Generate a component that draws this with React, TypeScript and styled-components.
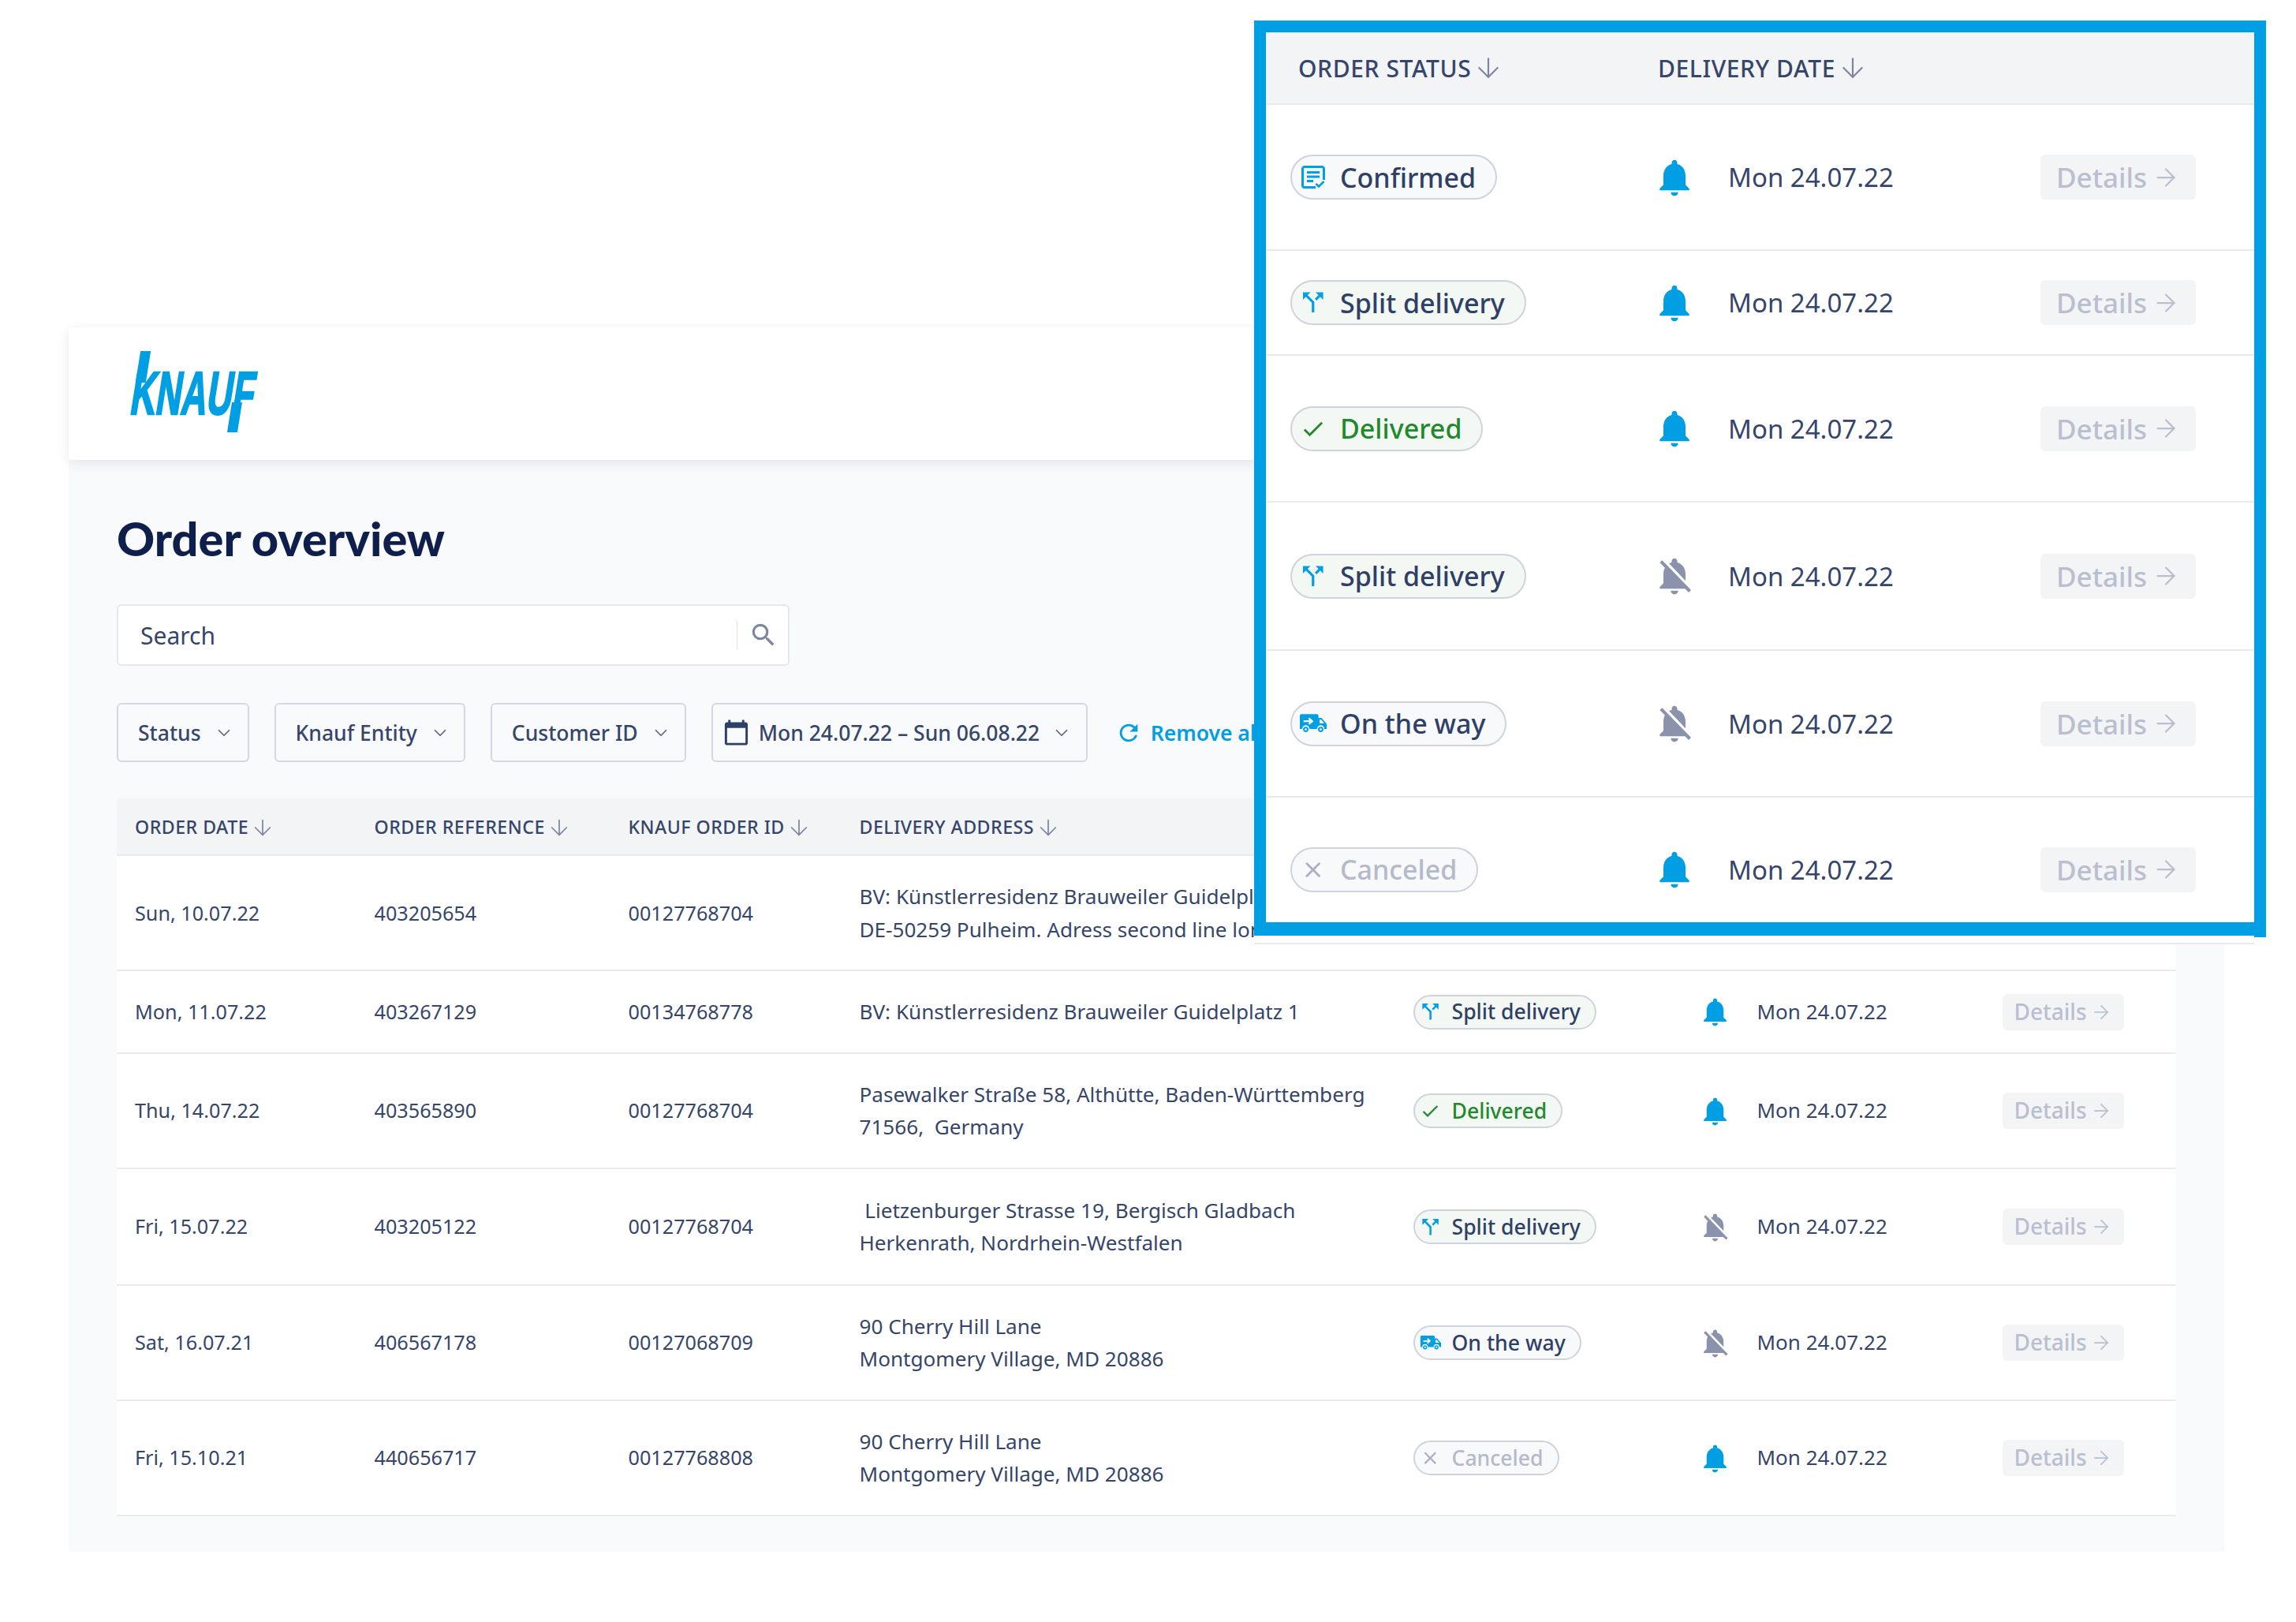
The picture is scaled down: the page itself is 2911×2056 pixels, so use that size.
import styled, { createGlobalStyle } from "styled-components";
import { ArrowDown, ArrowRight, ChevronDown } from "lucide-react";
import {
  MdCalendarToday,
  MdCallSplit,
  MdCheck,
  MdClose,
  MdNotifications,
  MdNotificationsOff,
  MdRefresh,
  MdSearch,
} from "react-icons/md";

type StatusKey = "confirmed" | "split" | "delivered" | "way" | "canceled";

const STATUS: Record<StatusKey, { label: string; tone: string }> = {
  confirmed: { label: "Confirmed", tone: "plain" },
  split: { label: "Split delivery", tone: "tint" },
  delivered: { label: "Delivered", tone: "done" },
  way: { label: "On the way", tone: "plain" },
  canceled: { label: "Canceled", tone: "off" },
};

const ORDERS: {
  date: string;
  reference: string;
  id: string;
  address: string[];
  status: StatusKey;
  muted?: boolean;
  tall?: boolean;
}[] = [
  {
    date: "Sun, 10.07.22",
    reference: "403205654",
    id: "00127768704",
    address: ["BV: Künstlerresidenz Brauweiler Guidelplatz 1", "DE-50259 Pulheim. Adress second line long"],
    status: "confirmed",
  },
  {
    date: "Mon, 11.07.22",
    reference: "403267129",
    id: "00134768778",
    address: ["BV: Künstlerresidenz Brauweiler Guidelplatz 1"],
    status: "split",
  },
  {
    date: "Thu, 14.07.22",
    reference: "403565890",
    id: "00127768704",
    address: ["Pasewalker Straße 58, Althütte, Baden-Württemberg", "71566,  Germany"],
    status: "delivered",
  },
  {
    date: "Fri, 15.07.22",
    reference: "403205122",
    id: "00127768704",
    address: [" Lietzenburger Strasse 19, Bergisch Gladbach", "Herkenrath, Nordrhein-Westfalen"],
    status: "split",
    muted: true,
    tall: true,
  },
  {
    date: "Sat, 16.07.21",
    reference: "406567178",
    id: "00127068709",
    address: ["90 Cherry Hill Lane", "Montgomery Village, MD 20886"],
    status: "way",
    muted: true,
  },
  {
    date: "Fri, 15.10.21",
    reference: "440656717",
    id: "00127768808",
    address: ["90 Cherry Hill Lane", "Montgomery Village, MD 20886"],
    status: "canceled",
  },
];

const CALLOUT_ROWS: { status: StatusKey; muted?: boolean; height: number }[] = [
  { status: "confirmed", height: 185 },
  { status: "split", height: 133 },
  { status: "delivered", height: 186 },
  { status: "split", muted: true, height: 188 },
  { status: "way", muted: true, height: 186 },
  { status: "canceled", height: 184 },
];

function ConfirmedIcon() {
  return (
    <svg viewBox="0 0 30 30" width="100%" height="100%" fill="none">
      <path d="M18 27.500H4a2.500 2.500 0 0 1-2.500-2.500V4A2.500 2.500 0 0 1 4 1.500h22A2.500 2.500 0 0 1 28.500 4v14" stroke="#009fe3" strokeWidth="3" />
      <path d="M7 8.500h16M7 14h16M7 19.500h8" stroke="#009fe3" strokeWidth="3" />
      <path d="M18.500 23l3.500 3.500 6.500-6.500" stroke="#009fe3" strokeWidth="2.600" />
    </svg>
  );
}

function TruckIcon() {
  return (
    <svg viewBox="0 0 36 27" width="100%" height="100%">
      <path d="M2 1h21a2 2 0 0 1 2 2v3h4l7 8v7h-3a5 5 0 0 0-10 0H13a5 5 0 0 0-10 0H0V3a2 2 0 0 1 2-2z" fill="#009fe3" />
      <path d="M26.500 8.500h2.300l4 5h-6.300z" fill="#fff" />
      <circle cx="8" cy="21.500" r="3.600" fill="#009fe3" />
      <circle cx="8" cy="21.500" r="1.500" fill="#fff" />
      <circle cx="28" cy="21.500" r="3.600" fill="#009fe3" />
      <circle cx="28" cy="21.500" r="1.500" fill="#fff" />
      <path d="M5 10.500h11M12 6.500l4.500 4-4.500 4" fill="none" stroke="#fff" strokeWidth="2.500" />
    </svg>
  );
}

function StatusIcon({ status }: { status: StatusKey }) {
  if (status === "confirmed") return <ConfirmedIcon />;
  if (status === "way") return <TruckIcon />;
  if (status === "split") return <MdCallSplit size="128%" color="#009fe3" />;
  if (status === "delivered") return <MdCheck size="110%" color="#1f8a2b" />;
  return <MdClose size="110%" color="#a9afc0" />;
}

function StatusPill({ status, $large }: { status: StatusKey; $large?: boolean }) {
  const { label, tone } = STATUS[status];
  return (
    <Pill $tone={tone} $large={$large}>
      <PillIcon $large={$large}>
        <StatusIcon status={status} />
      </PillIcon>
      {label}
    </Pill>
  );
}

function SortHead({ label, $large }: { label: string; $large?: boolean }) {
  return (
    <HeadLabel $large={$large}>
      {label}
      <ArrowDown size={$large ? 40 : 32} strokeWidth={1.3} color="#7c86a0" />
    </HeadLabel>
  );
}

function Bell({ muted, $large }: { muted?: boolean; $large?: boolean }) {
  const size = $large ? 56 : 43;
  return (
    <BellBox>
      {muted ? <MdNotificationsOff size={size} color="#8a93ab" /> : <MdNotifications size={size} color="#009fe3" />}
    </BellBox>
  );
}

function Details({ $large }: { $large?: boolean }) {
  return (
    <DetailsButton $large={$large}>
      Details
      <ArrowRight size={$large ? 36 : 28} strokeWidth={1.5} />
    </DetailsButton>
  );
}

export default function App() {
  return (
    <Page>
      <GlobalStyle />
      <Panel>
        <TopBar>
          <Logo>
            <LogoText>KNAUF</LogoText>
          </Logo>
        </TopBar>

        <Content>
          <Title>Order overview</Title>

          <SearchBox>
            <SearchText>Search</SearchText>
            <SearchDivider />
            <MdSearch size={38} color="#7c86a0" />
          </SearchBox>

          <Filters>
            <FilterButton>
              Status
              <ChevronDown size={26} strokeWidth={1.6} color="#5b6684" />
            </FilterButton>
            <FilterButton>
              Knauf Entity
              <ChevronDown size={26} strokeWidth={1.6} color="#5b6684" />
            </FilterButton>
            <FilterButton>
              Customer ID
              <ChevronDown size={26} strokeWidth={1.6} color="#5b6684" />
            </FilterButton>
            <DateFilter>
              <MdCalendarToday size={35} color="#2f4066" />
              <DateRange>Mon 24.07.22 – Sun 06.08.22</DateRange>
              <ChevronDown size={26} strokeWidth={1.6} color="#5b6684" />
            </DateFilter>
            <RemoveAll>
              <MdRefresh size={34} />
              Remove all
            </RemoveAll>
          </Filters>

          <Table>
            <TableHead>
              <SortHead label="ORDER DATE" />
              <SortHead label="ORDER REFERENCE" />
              <SortHead label="KNAUF ORDER ID" />
              <SortHead label="DELIVERY ADDRESS" />
              <SortHead label="ORDER STATUS" />
              <SortHead label="DELIVERY DATE" />
            </TableHead>
            {ORDERS.map((order) => (
              <TableRow key={order.reference} $tall={order.tall}>
                <span>{order.date}</span>
                <span>{order.reference}</span>
                <span>{order.id}</span>
                <Address>
                  {order.address.map((line) => (
                    <div key={line}>{line}</div>
                  ))}
                </Address>
                <StatusCell>
                  <StatusPill status={order.status} />
                </StatusCell>
                <Bell muted={order.muted} />
                <DeliveryDate>Mon 24.07.22</DeliveryDate>
                <Details />
              </TableRow>
            ))}
          </Table>
        </Content>
      </Panel>

      <Callout>
        <CalloutBody>
          <CalloutHead>
            <SortHead label="ORDER STATUS" $large />
            <SortHead label="DELIVERY DATE" $large />
          </CalloutHead>
          {CALLOUT_ROWS.map((row, i) => (
            <CalloutRow key={i} $height={row.height}>
              <StatusCell>
                <StatusPill status={row.status} $large />
              </StatusCell>
              <Bell muted={row.muted} $large />
              <span>Mon 24.07.22</span>
              <Details $large />
            </CalloutRow>
          ))}
        </CalloutBody>
      </Callout>
    </Page>
  );
}

/* ===== styled-components ===== */

const GlobalStyle = createGlobalStyle`
  * {
    box-sizing: border-box;
  }

  body {
    margin: 0;
    background: #ffffff;
    font-family: "Noto Sans", "Open Sans", sans-serif;
    color: #36456a;
  }
`;

const Page = styled.div`
  position: relative;
  width: 2911px;
  height: 2056px;
  padding: 415px 91px 0 87px;
  overflow: hidden;
`;

const Panel = styled.div`
  height: 1552px;
  background: #f9fafb;
`;

const TopBar = styled.header`
  height: 168px;
  padding: 55px 0 0 76px;
  background: #ffffff;
  box-shadow: 0 4px 14px rgba(30, 40, 70, 0.1);
`;

const Logo = styled.div`
  position: relative;
  width: 161px;
  height: 56px;

  &::before,
  &::after {
    content: "";
    position: absolute;
    background: #009fe3;
    transform: skewX(-9deg);
  }

  /* tall stem of the k and long stem of the f */
  &::before {
    left: 12px;
    top: -25px;
    width: 13px;
    height: 40px;
  }

  &::after {
    left: 128px;
    top: 40px;
    width: 13px;
    height: 38px;
  }
`;

const LogoText = styled.span`
  display: block;
  font-family: "Liberation Sans", Arial, sans-serif;
  font-size: 77px;
  font-weight: 700;
  line-height: 56px;
  color: #009fe3;
  white-space: nowrap;
  -webkit-text-stroke: 2.5px #009fe3;
  transform-origin: 0 100%;
  transform: skewX(-9deg) scaleX(0.58);
`;

const Content = styled.main`
  padding: 0 62px 0 61px;
`;

const Title = styled.h1`
  margin: 0;
  padding-top: 63px;
  height: 183px;
  font-family: Lato, sans-serif;
  font-size: 59.5px;
  font-weight: 900;
  line-height: 72px;
  color: #0f1f4b;
`;

const SearchBox = styled.div`
  display: flex;
  align-items: center;
  width: 853px;
  height: 78px;
  padding: 0 12px 0 28px;
  background: #ffffff;
  border: 2px solid #e6e8ed;
  border-radius: 6px;
`;

const SearchText = styled.span`
  flex: 1;
  font-size: 30px;
`;

const SearchDivider = styled.span`
  width: 1px;
  height: 38px;
  margin-right: 14px;
  background: #dfe2e8;
`;

const Filters = styled.div`
  display: flex;
  align-items: center;
  gap: 31.5px;
  margin-top: 47px;
  white-space: nowrap;
`;

const FilterButton = styled.div`
  display: flex;
  align-items: center;
  gap: 16px;
  height: 75px;
  padding: 0 17.5px 0 25px;
  font-size: 26.5px;
  font-weight: 500;
  border: 2px solid #d4d8e0;
  border-radius: 6px;
`;

const DateFilter = styled(FilterButton)`
  gap: 0;
  padding: 0 18px 0 12px;
`;

const DateRange = styled.span`
  margin: 0 15px 0 11px;
`;

const RemoveAll = styled.div`
  display: flex;
  align-items: center;
  gap: 11px;
  margin-left: 3px;
  font-size: 26.5px;
  font-weight: 600;
  color: #009fe3;
`;

const Table = styled.section`
  margin-top: 46px;
  font-size: 25.2px;
  line-height: 41.5px;
`;

const TableHead = styled.div`
  display: grid;
  grid-template-columns: 303.5px 322px 293px 702px 361px 1fr;
  align-items: center;
  height: 73px;
  padding: 2px 0 0 23px;
  background: #f3f4f6;
  border-bottom: 2px solid #e8eaee;
  border-radius: 4px 4px 0 0;
`;

const HeadLabel = styled.div<{ $large?: boolean }>`
  display: flex;
  align-items: center;
  gap: 2px;
  font-size: ${(p) => (p.$large ? 30 : 23.2)}px;
  font-weight: 500;
  letter-spacing: 0.02em;
  white-space: nowrap;
`;

const TableRow = styled.div<{ $tall?: boolean }>`
  display: grid;
  grid-template-columns: 303.5px 322px 293px 702px 361px 75px 311px 1fr;
  align-items: center;
  padding: ${(p) => (p.$tall ? "32px" : "31px")} 0 ${(p) => (p.$tall ? "31px" : "30px")} 23px;
  background: #ffffff;
  border-bottom: 2px solid #e8eaee;
  white-space: nowrap;
`;

const Address = styled.div`
  min-width: 0;
  font-size: 26.1px;
  white-space: pre;
`;

const DeliveryDate = styled.span`
  font-size: 26px;
`;

const StatusCell = styled.div`
  display: flex;
`;

const Pill = styled.span<{ $tone: string; $large?: boolean }>`
  display: inline-flex;
  align-items: center;
  height: ${(p) => (p.$large ? 57 : 44)}px;
  margin: ${(p) => (p.$large ? 0 : "-2px 0")};
  padding: ${(p) => (p.$large ? "0 25px 0 10px" : "0 18px 0 7px")};
  font-size: ${(p) => (p.$large ? 34 : 26.6)}px;
  font-weight: 500;
  line-height: 1;
  white-space: nowrap;
  border: 2px solid #cfd3dd;
  border-radius: 999px;
  background: ${(p) => (p.$tone === "tint" || p.$tone === "done" ? "#f3f8f4" : "#f8f9fb")};
  color: ${(p) => (p.$tone === "done" ? "#1f8a2b" : p.$tone === "off" ? "#b4bac9" : "#2f4066")};
`;

const PillIcon = styled.span<{ $large?: boolean }>`
  display: inline-flex;
  align-items: center;
  justify-content: center;
  width: ${(p) => (p.$large ? 34 : 26)}px;
  height: ${(p) => (p.$large ? 30 : 24)}px;
  margin-right: ${(p) => (p.$large ? 17 : 14)}px;

  svg {
    flex-shrink: 0;
  }
`;

const BellBox = styled.span`
  display: flex;
  align-items: center;
  margin: -2px 0;
`;

const DetailsButton = styled.span<{ $large?: boolean }>`
  display: inline-flex;
  align-items: center;
  justify-content: center;
  gap: ${(p) => (p.$large ? 6 : 4)}px;
  width: ${(p) => (p.$large ? 197 : 154)}px;
  height: ${(p) => (p.$large ? 57 : 46)}px;
  margin: ${(p) => (p.$large ? 0 : "-4px 0")};
  font-size: ${(p) => (p.$large ? 35 : 28)}px;
  font-weight: 500;
  color: #b9bfcf;
  background: #f3f4f6;
  border-radius: 6px;
`;

const Callout = styled.aside`
  position: absolute;
  left: 1590px;
  top: 26px;
  width: 1283px;
  height: 1162px;
  background: #ffffff;
  border-style: solid;
  border-color: #009fe3;
  border-width: 15px 15px 19px;

  /* the strip of the cropped table that hangs under the frame */
  &::after {
    content: "";
    position: absolute;
    left: -15px;
    right: 0;
    bottom: -28px;
    height: 9px;
    background: #ffffff;
    border-bottom: 2px solid #e8eaee;
  }
`;

const CalloutBody = styled.div`
  height: 100%;
  overflow: hidden;
  font-size: 33px;
`;

const CalloutHead = styled.div`
  display: grid;
  grid-template-columns: 456px 1fr;
  align-items: center;
  height: 92px;
  padding-left: 41px;
  background: #f3f4f6;
  border-bottom: 2px solid #e8eaee;
`;

const CalloutRow = styled.div<{ $height: number }>`
  display: grid;
  grid-template-columns: 459px 96px 396px 1fr;
  align-items: center;
  height: ${(p) => p.$height}px;
  padding-left: 31px;
  border-bottom: 2px solid #e8eaee;
  white-space: nowrap;
`;
